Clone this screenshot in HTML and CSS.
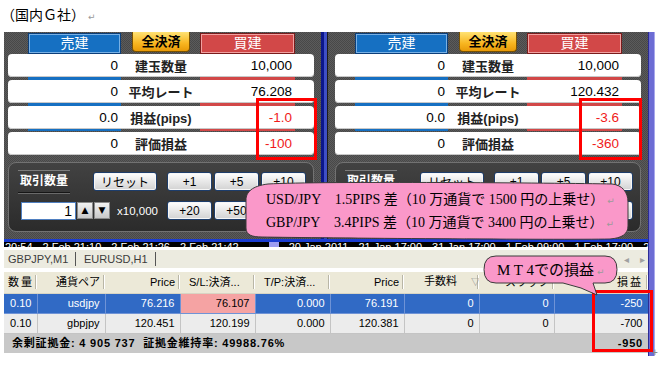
FILE: index.html
```html
<!DOCTYPE html>
<html lang="ja">
<head>
  <meta charset="UTF-8">
  <meta name="viewport" content="width=device-width, initial-scale=1.0">
  <title>国内G社 スプレッド比較</title>
  <link rel="stylesheet" href="styles.css">
</head>
<body>
  <div class="page">
    <p class="title">（国内Ｇ社）<span class="ret">↵</span></p>

    <div class="shot">
      <div class="main">
        <!-- two trading panels, USD/JPY and GBP/JPY -->
        <div class="panels">
          <section class="trade trade-left">
            <div class="sides">
              <div class="side sell">売建</div>
              <div class="close-all">全決済</div>
              <div class="side buy">買建</div>
            </div>
            <div class="rows">
              <div class="row"><span class="val">0</span><span class="lbl">建玉数量</span><span class="val">10,000</span></div>
              <div class="row"><span class="val">0</span><span class="lbl">平均レート</span><span class="val">76.208</span></div>
              <div class="row"><span class="val">0.0</span><span class="lbl">損益(pips)</span><span class="val loss">-1.0</span></div>
              <div class="row"><span class="val">0</span><span class="lbl">評価損益</span><span class="val loss">-100</span></div>
            </div>
            <div class="qty">
              <div class="qty-line">
                <span class="qty-label">取引数量</span>
                <button class="btn reset">リセット</button>
                <div class="steps"><button class="btn">+1</button><button class="btn">+5</button><button class="btn">+10</button></div>
              </div>
              <div class="qty-line">
                <span class="qty-input">1</span>
                <button class="spin">▲</button><button class="spin">▼</button>
                <span class="unit">x10,000</span>
                <div class="steps"><button class="btn">+20</button><button class="btn">+50</button><button class="btn">+100</button></div>
              </div>
            </div>
          </section>

          <div class="divider"></div>

          <section class="trade trade-right">
            <div class="sides">
              <div class="side sell">売建</div>
              <div class="close-all">全決済</div>
              <div class="side buy">買建</div>
            </div>
            <div class="rows">
              <div class="row"><span class="val">0</span><span class="lbl">建玉数量</span><span class="val">10,000</span></div>
              <div class="row"><span class="val">0</span><span class="lbl">平均レート</span><span class="val">120.432</span></div>
              <div class="row"><span class="val">0.0</span><span class="lbl">損益(pips)</span><span class="val loss">-3.6</span></div>
              <div class="row"><span class="val">0</span><span class="lbl">評価損益</span><span class="val loss">-360</span></div>
            </div>
            <div class="qty">
              <div class="qty-line">
                <span class="qty-label">取引数量</span>
                <button class="btn reset">リセット</button>
                <div class="steps"><button class="btn">+1</button><button class="btn">+5</button><button class="btn">+10</button></div>
              </div>
              <div class="qty-line">
                <span class="qty-input">1</span>
                <button class="spin">▲</button><button class="spin">▼</button>
                <span class="unit">x10,000</span>
                <div class="steps"><button class="btn">+20</button><button class="btn">+50</button><button class="btn">+100</button></div>
              </div>
            </div>
          </section>
        </div>

        <div class="axis-line"></div>
        <div class="chart-axis">
          <span>20:54</span><span>2 Feb 21:10</span><span>2 Feb 21:26</span><span>2 Feb 21:42</span>
          <i class="scroll-mark"></i>
          <span>20 Jan 2011</span><span>21 Jan 17:00</span><span>31 Jan 17:00</span><span>1 Feb 09:00</span><span>1 Feb 17:00</span><span>2 Feb 17:00</span>
        </div>

        <div class="tabs">
          <span class="tab tab-first">GBPJPY,M1</span>
          <span class="tab">EURUSD,H1</span>
          <span class="tab-arrows"><span>◂</span><span>▸</span></span>
        </div>

        <!-- MT4 trade terminal -->
        <table class="orders">
          <colgroup>
            <col class="c-lots"><col class="c-pair"><col class="c-num"><col class="c-num"><col class="c-num">
            <col class="c-price"><col class="c-num"><col class="c-num"><col class="c-profit">
          </colgroup>
          <thead>
            <tr>
              <th class="left spaced">数量</th>
              <th>通貨ペア</th>
              <th>Price</th>
              <th class="left cut">S/L:決済...</th>
              <th class="left cut">T/P:決済...</th>
              <th>Price</th>
              <th class="left fee">手数料<span class="sort">▽</span></th>
              <th>スワップ</th>
              <th class="spaced">損益</th>
            </tr>
          </thead>
          <tbody>
            <tr class="selected">
              <td>0.10</td><td>usdjpy</td><td>76.216</td><td class="sl">76.107</td><td>0.000</td>
              <td>76.191</td><td>0</td><td>0</td><td>-250</td>
            </tr>
            <tr>
              <td>0.10</td><td>gbpjpy</td><td>120.451</td><td>120.199</td><td>0.000</td>
              <td>120.381</td><td>0</td><td>0</td><td>-700</td>
            </tr>
            <tr class="summary">
              <td colspan="8">余剰証拠金: 4 905 737&nbsp;&nbsp;証拠金維持率: 49988.76%</td>
              <td>-950</td>
            </tr>
          </tbody>
        </table>
      </div>
      <div class="edge"></div>
    </div>

    <!-- red highlight frames -->
    <div class="frame frame-usd"></div>
    <div class="frame frame-gbp"></div>
    <div class="frame frame-mt4"></div>

    <!-- callouts -->
    <div class="wave">
      <svg class="wave-shape" viewBox="0 0 386 62" width="386" height="62">
        <path d="M2,20 C2,12 8,6 24,4 C76,1 316,3 368,4 C378,5 384,12 384,22 L384,46 C384,54 378,58 366,59 C316,60 76,58 18,57 C8,57 2,55 2,48 Z" fill="#fa98c9" stroke="#3a3a3a" stroke-width="1"/>
      </svg>
      <p>USD/JPY　1.5PIPS 差（10 万通貨で 1500 円の上乗せ）<span class="ret">↵</span></p>
      <p>GBP/JPY　3.4PIPS 差（10 万通貨で 3400 円の上乗せ）<span class="ret">↵</span></p>
    </div>

    <div class="bubble">
      <svg class="bubble-shape" viewBox="0 0 140 44" width="140" height="44">
        <path d="M14,2 L123,2 Q135,2 135,15.5 Q135,29 123,29 L111,29 L115,41 Q100,33 81,29 L14,29 Q2,29 2,15.5 Q2,2 14,2 Z" fill="#fa98c9" stroke="#3a3a3a" stroke-width="1"/>
      </svg>
      <p><span class="mt">M T 4</span>での損益<span class="ret">↵</span></p>
    </div>

    <span class="anchor">+</span>
  </div>
</body>
</html>
```

FILE: styles.css
```css
/* General */
* {
  box-sizing: border-box;
}

body {
  margin: 0;
  background: #fff;
  font-family: "Liberation Sans", "Noto Sans CJK JP", sans-serif;
  color: #000;
}

.page {
  position: relative;
  width: 659px;
  height: 367px;
  overflow: hidden;
}

.title {
  margin: 0;
  height: 32px;
  padding: 6px 0 0 1px;
  font-family: "Noto Sans CJK JP", sans-serif;
  font-size: 14px;
  line-height: 16px;
}

/* Word paragraph marks */
.ret {
  margin-left: 3px;
  color: #9a9a9a;
  font-family: "DejaVu Sans", sans-serif;
  font-size: 9px;
}

/* Screenshot frame */
.shot {
  display: flex;
  width: 651px;
  margin-left: 4px;
}

.main {
  width: 644px;
}

.edge {
  width: 7px;
  height: 324px;
  background: linear-gradient(to right, #2b2b96 0 1px, #6c6cd4 1px 6px, #a8a8ec 6px);
}

/* Trading panels */
.panels {
  display: flex;
  height: 207px;
}

.trade {
  width: 317px;
  padding: 0 7px 0 4px;
  background: repeating-conic-gradient(#5b5b5b 0 25%, #484848 0 50%) 0 0 / 2px 2px;
}

.trade-right {
  width: 320px;
  padding-left: 7px;
}

.divider {
  width: 7px;
  background: linear-gradient(to right, #0b168c 0 3px, #3f4fc6 3px 6px, #1c1c1c 6px);
}

.sides {
  display: flex;
  align-items: flex-start;
  height: 22px;
  padding-left: 20px;
}

.side {
  width: 93px;
  height: 21px;
  margin-top: 1px;
  border: 1px solid;
  color: #fff;
  font-size: 14px;
  line-height: 19px;
  text-align: center;
}

.sell {
  background: #1670c2;
  border-color: #0c3f7a;
  box-shadow: inset 0 0 0 1px #78b0e4;
}

.buy {
  width: 95px;
  background: #d24848;
  border-color: #7a1c1c;
  box-shadow: inset 0 0 0 1px #f0a0a0;
}

.close-all {
  width: 58px;
  height: 20px;
  margin: 0 10px 0 11px;
  border: 1px solid #7a5200;
  border-top: 0;
  border-radius: 0 0 4px 4px;
  background: linear-gradient(#ffe274, #f8b620 60%, #e89a08);
  font-size: 13px;
  font-weight: bold;
  line-height: 19px;
  text-align: center;
}

.rows {
  display: flex;
  flex-direction: column;
  gap: 3px;
  background:
    linear-gradient(#1670c2, #1670c2) 20px 0 / 93px 77px no-repeat,
    linear-gradient(#d24848, #d24848) 192px 0 / 95px 77px no-repeat;
}

.row {
  display: grid;
  grid-template-columns: 110px 86px 88px;
  align-items: center;
  height: 23px;
  border-radius: 4px;
  background: #fff;
  box-shadow: inset 0 -1px 0 #c8c8c8;
}

.val {
  font-size: 13.5px;
  text-align: right;
}

.lbl {
  font-size: 13px;
  font-weight: bold;
  color: #222;
  text-align: center;
}

.loss {
  color: #f01a1a;
}

/* Trade quantity box */
.qty {
  display: flex;
  flex-direction: column;
  gap: 10px;
  height: 70px;
  margin-top: 7px;
  padding: 9px 7px 0 0;
  border: 1px solid #727272;
  border-radius: 8px;
  background: linear-gradient(#424242, #2b2b2b);
}

.qty-line {
  display: flex;
  align-items: center;
  height: 19px;
}

.qty-label {
  flex: none;
  width: 52px;
  height: 23px;
  margin-left: 9px;
  border-top: 1px solid #7c7c7c;
  border-bottom: 1px solid #161616;
  box-shadow: 0 1px 0 #6a6a6a;
  color: #fff;
  font-size: 12px;
  font-weight: bold;
  line-height: 21px;
  text-align: center;
}

.btn {
  height: 19px;
  padding: 0;
  border: 1px solid #1d3d6b;
  border-radius: 3px;
  background: linear-gradient(#ffffff, #e8e8e8 50%, #d2d2d2);
  box-shadow: inset 0 0 0 1px #f6f6f6;
  color: #000;
  font: 12px "Liberation Sans", "Noto Sans CJK JP", sans-serif;
}

.reset {
  width: 64px;
  margin-left: 23px;
}

.steps {
  display: flex;
  gap: 2px;
  margin-left: auto;
}

.steps .btn {
  width: 45px;
}

.qty-input {
  width: 55px;
  height: 18px;
  margin-left: 12px;
  padding-right: 3px;
  border: 1px solid #4f7fc0;
  background: #fff;
  font-size: 14px;
  line-height: 16px;
  text-align: right;
}

.spin {
  width: 16px;
  height: 17px;
  margin-left: 1px;
  padding: 0;
  border: 1px solid #8a8a8a;
  background: linear-gradient(#f2f2f2, #c8c8c8);
  color: #000;
  font: 9px/15px "DejaVu Sans", sans-serif;
}

.unit {
  margin-left: 7px;
  color: #fff;
  font-size: 11.5px;
}

/* Chart time axis, cut off by the panel */
.axis-line {
  height: 3px;
  background: #1a3cd2;
}

.chart-axis {
  display: flex;
  gap: 10px;
  height: 5px;
  padding-left: 1px;
  overflow: hidden;
  background: #000;
  color: #fff;
  font-size: 11px;
  line-height: 11px;
  white-space: nowrap;
}

.scroll-mark {
  flex: none;
  width: 10px;
  margin-left: 20px;
  background: #9c9cf0;
}

/* Chart tabs */
.tabs {
  display: flex;
  align-items: center;
  height: 18px;
  margin-top: 3px;
  background: #ecebe0;
  color: #3c3c3c;
  font-size: 11px;
}

.tab {
  width: 80px;
  padding-left: 8px;
  border-right: 1px solid #555;
  line-height: 14px;
}

.tab-first {
  width: 72px;
  padding-left: 4px;
}

.tab-arrows {
  display: flex;
  gap: 11px;
  margin: 0 3px 0 auto;
  color: #a0a0a0;
  font: 10px "DejaVu Sans", sans-serif;
}

/* Terminal table */
.orders {
  width: 644px;
  margin-top: 4px;
  border-collapse: collapse;
  table-layout: fixed;
  font-size: 11px;
  line-height: 13px;
}

.c-lots { width: 33px; }
.c-pair { width: 68px; }
.c-num { width: 75px; }
.c-price { width: 74px; }
.c-profit { width: 94px; }

.orders thead tr {
  height: 21px;
}

.orders tbody tr {
  height: 20px;
}

.orders th {
  padding: 0 5px 0 0;
  border-bottom: 1px solid #d8d5c4;
  background:
    linear-gradient(#b9b6a6, #b9b6a6) right 1px center / 1px 14px no-repeat,
    linear-gradient(#fff, #fff) right 0 center / 1px 14px no-repeat,
    #ece9d8;
  font-weight: normal;
  text-align: right;
  white-space: nowrap;
  overflow: hidden;
}

.orders th.left {
  text-align: left;
  padding-left: 4px;
}

.orders th.cut {
  padding-left: 9px;
}

.orders th.fee {
  padding-left: 20px;
}

.orders th.spaced {
  letter-spacing: 2px;
}

.sort {
  margin-left: 14px;
  color: #888;
  font-size: 9px;
}

.orders td {
  padding: 0 5px 0 0;
  border-right: 1px solid #c4c4c4;
  border-bottom: 1px solid #c4c4c4;
  background: #ececec;
  text-align: right;
  white-space: nowrap;
  overflow: hidden;
}

.orders .selected td {
  border-color: #6f93d6;
  background: #316ac5;
  color: #fff;
}

.orders .selected td.sl {
  background: #f5a3a3;
  color: #000;
}

.orders .summary td {
  border: 0;
  background: #c8c8c8;
  font-weight: bold;
  letter-spacing: 0.8px;
}

.orders .summary td:first-child {
  padding-left: 8px;
  text-align: left;
}

/* Overlays */
.frame {
  position: absolute;
  border: 3px solid #ff0000;
}

.frame-usd {
  left: 256px;
  top: 98px;
  width: 61px;
  height: 62px;
}

.frame-gbp {
  left: 579px;
  top: 98px;
  width: 63px;
  height: 62px;
}

.frame-mt4 {
  left: 592px;
  top: 290px;
  width: 61px;
  height: 62px;
}

.wave {
  position: absolute;
  left: 244px;
  top: 180px;
  width: 386px;
  height: 62px;
  padding: 9px 0 0 22px;
  font-family: "Liberation Serif", "Noto Sans CJK JP", serif;
  font-size: 14px;
  line-height: 22px;
}

.wave p,
.bubble p {
  position: relative;
  margin: 0;
  white-space: nowrap;
}

.wave-shape,
.bubble-shape {
  position: absolute;
  left: 0;
  top: 0;
}

.bubble {
  position: absolute;
  left: 482px;
  top: 254px;
  width: 140px;
  height: 44px;
  padding: 7px 0 0 15px;
  font-family: "Liberation Serif", "Noto Sans CJK JP", serif;
  font-size: 15px;
  line-height: 18px;
}

.anchor {
  position: absolute;
  left: 652px;
  top: 347px;
  color: #888;
  font-size: 10px;
}
```
